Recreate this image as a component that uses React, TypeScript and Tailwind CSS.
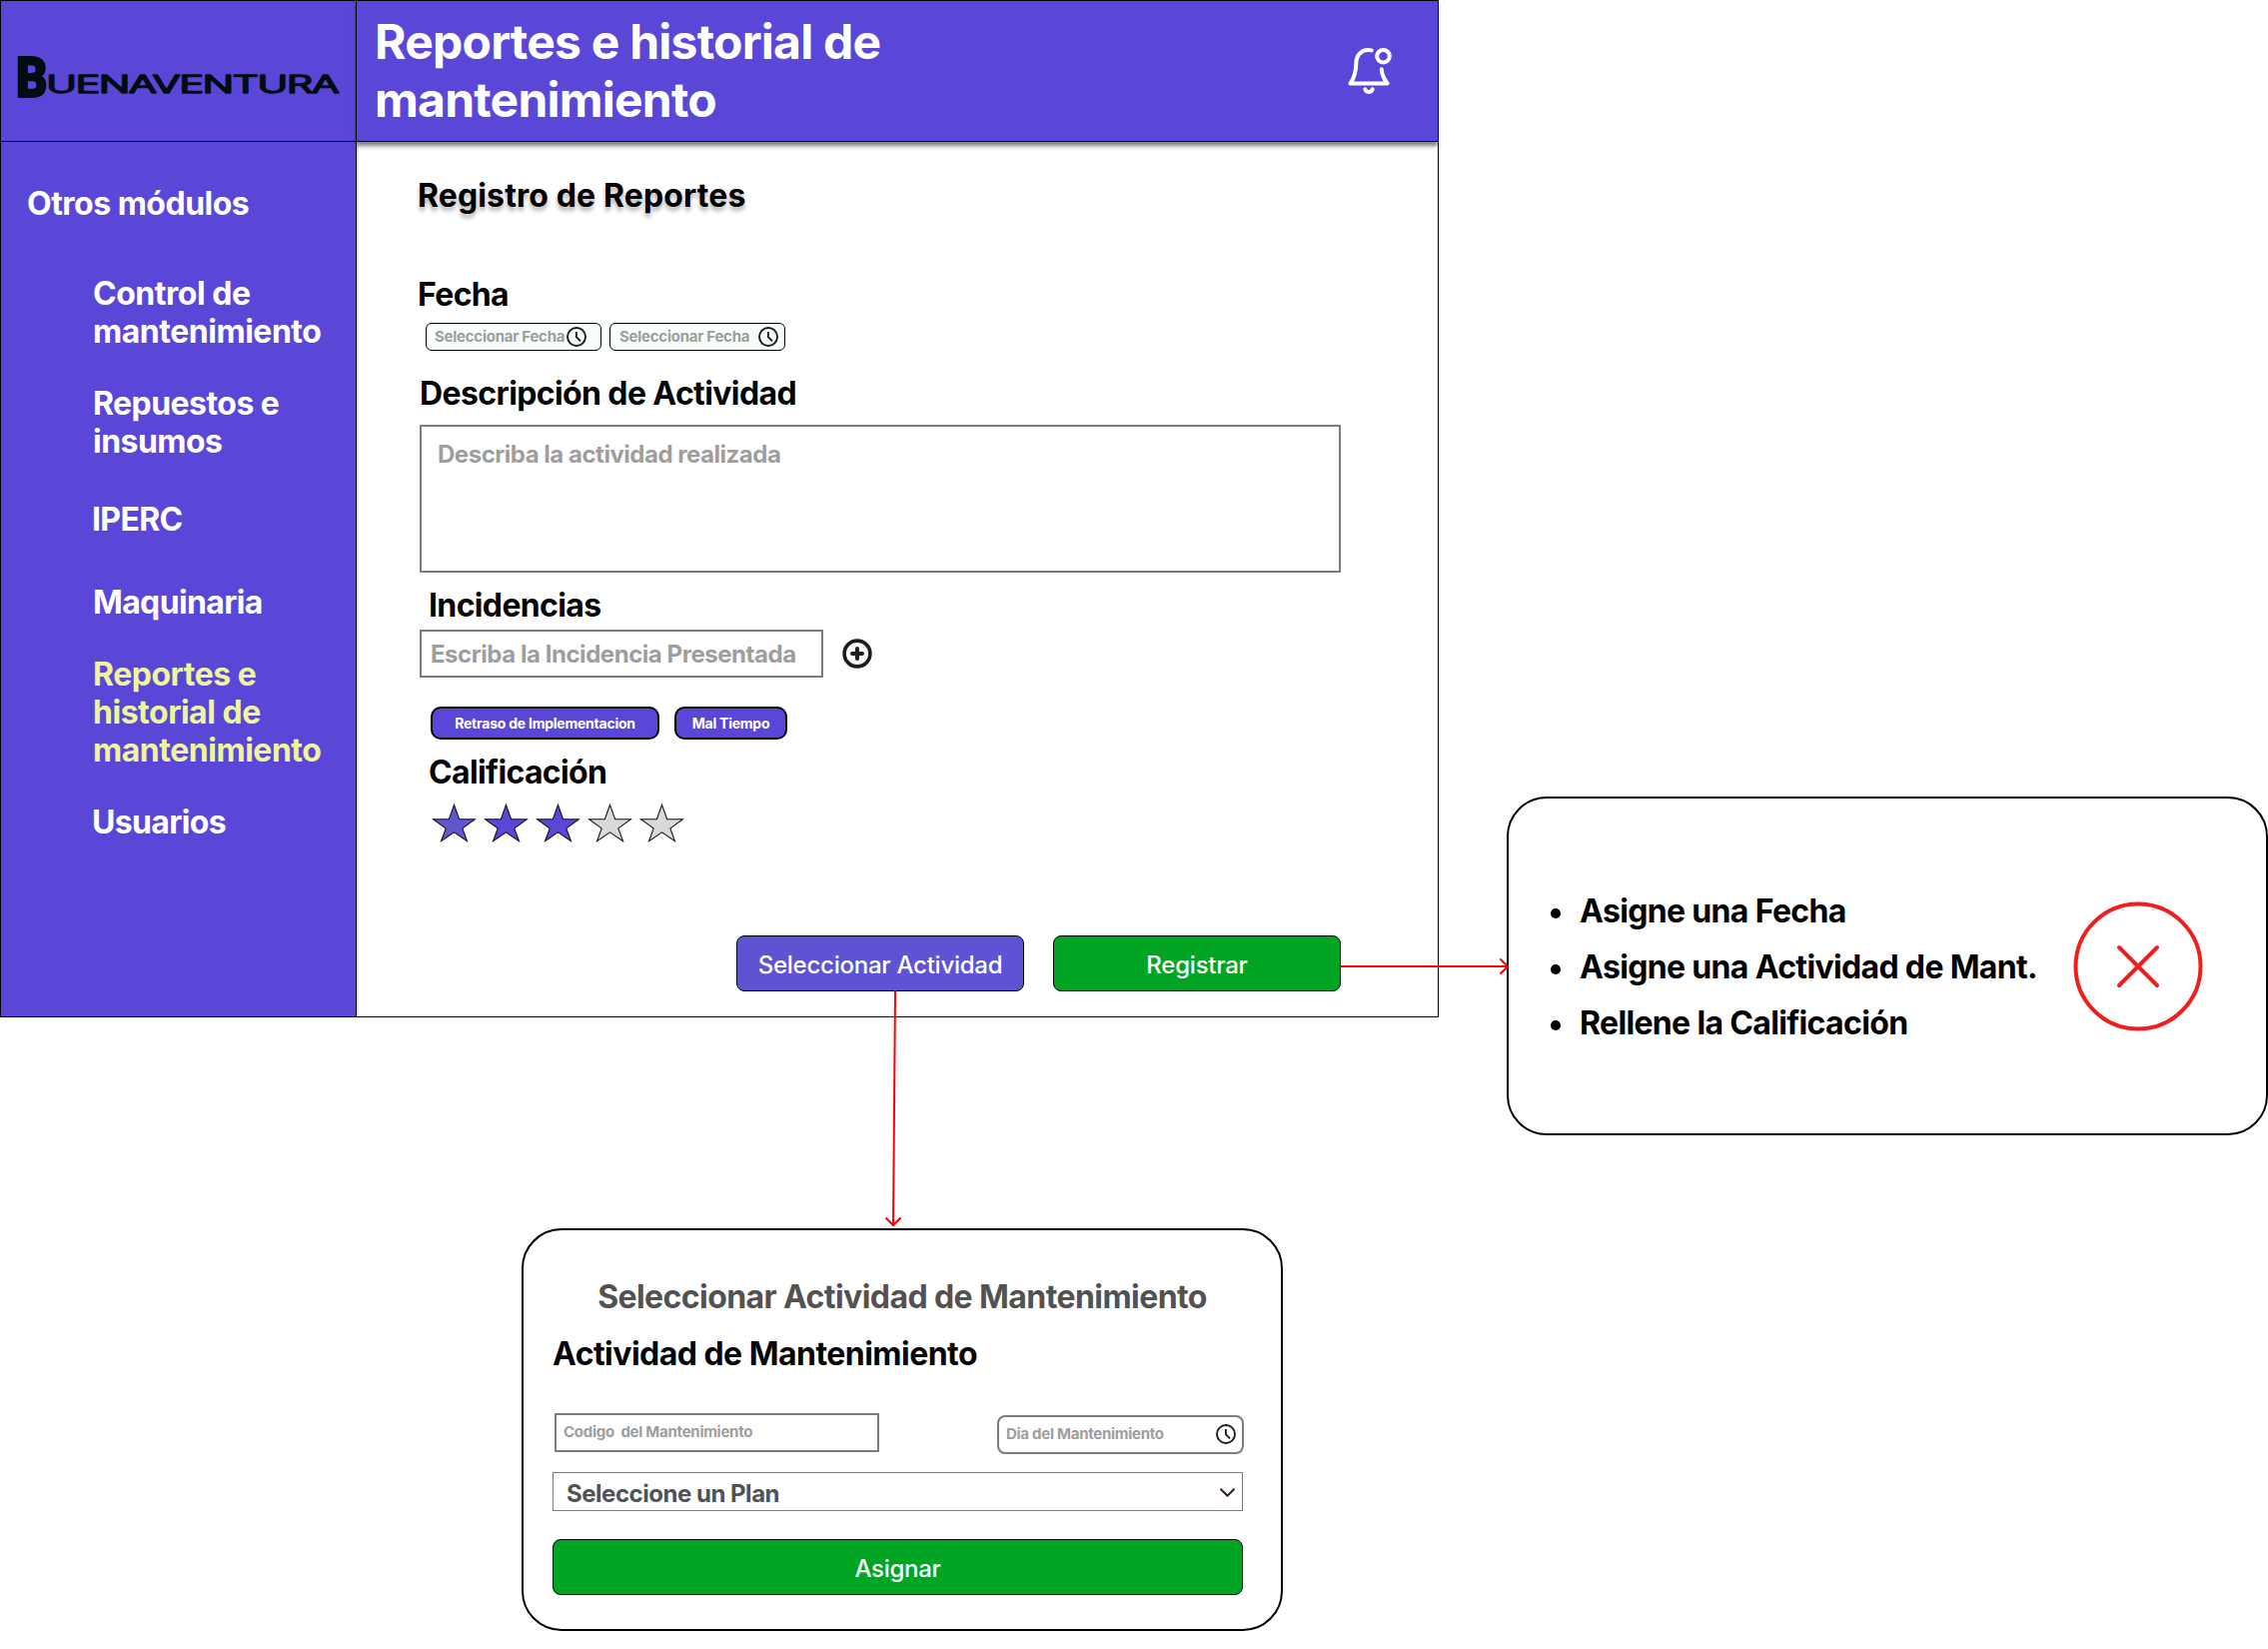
import React from "react";

const starPath = "M23 1.6 L28.3 16.4 L44.6 16.4 L31.6 25.9 L36.4 39 L23 29.9 L9.6 39 L14.4 25.9 L1.4 16.4 L17.7 16.4 Z";

function Star({ fill }: { fill: string }) {
  return (
    <svg className="h-10 w-[46px]" viewBox="0 0 46 40">
      <path d={starPath} fill={fill} stroke="#111" strokeWidth="1.1" transform="translate(1.2 0.8) scale(0.97)" />
    </svg>
  );
}

function Clock() {
  return (
    <svg className="h-5 w-5 shrink-0" viewBox="0 0 20 20" fill="none" stroke="#1d1b20" strokeWidth="1.9">
      <circle cx="10" cy="10" r="9" />
      <path d="M9.9 5v5.2l4.1 4.1" />
    </svg>
  );
}

function Logo() {
  return (
    <svg className="h-[141px] w-[355px] shrink-0" viewBox="0 0 355 141" fill="#020d12" stroke="#020d12" strokeLinejoin="round">
      <text x="15" y="96" fontFamily="Roboto" fontWeight="900" fontSize="55" strokeWidth="2" textLength="31" lengthAdjust="spacingAndGlyphs">B</text>
      <text x="45.5" y="92" fontFamily="Inter" fontWeight="300" fontSize="23.5" strokeWidth="1.7" textLength="292" lengthAdjust="spacingAndGlyphs">UENAVENTURA</text>
    </svg>
  );
}

function Sidebar() {
  return (
    <aside className="flex w-[356px] shrink-0 flex-col border-r border-black bg-[#5b47d7] text-white shadow-[1px_0_2px_rgba(0,0,0,0.25)]">
      <div className="h-[141px] border-b border-black">
        <Logo />
      </div>
      <h2 className="mt-[43px] ml-[26px] leading-[38px] tracking-[-0.016em]">Otros módulos</h2>
      <nav className="ml-[92px] flex flex-col leading-[38px]">
        <a className="mt-[52px] tracking-[-0.015em]">Control de<br />mantenimiento</a>
        <a className="mt-[34px] tracking-[-0.017em]">Repuestos e<br />insumos</a>
        <a className="mt-[40px] -ml-px">IPERC</a>
        <a className="mt-[45px]">Maquinaria</a>
        <a className="mt-[34px] tracking-[-0.015em] text-[#eff59a]">Reportes e<br />historial de<br />mantenimiento</a>
        <a className="mt-[34px] -ml-px tracking-[-0.021em]">Usuarios</a>
      </nav>
    </aside>
  );
}

function Screen() {
  return (
    <div className="flex h-[1018px] w-[1440px] border border-black bg-white text-[32px] font-bold tracking-[-0.02em]">
      <Sidebar />
      <main className="flex grow flex-col">
        <header className="flex h-[141px] shrink-0 items-start justify-between border-b border-black bg-[#5b47d7] text-white shadow-[0_4px_4px_rgba(0,0,0,0.5)]">
          <h1 className="mt-[12px] ml-[18px] text-[48px] leading-[58px] tracking-[-0.016em]">Reportes e historial de<br />mantenimiento</h1>
          <svg className="mt-[40px] mr-[41px] h-[60px] w-[56px]" viewBox="0 0 56 60" fill="none" stroke="#fff" strokeWidth="4" strokeLinecap="round" strokeLinejoin="round">
            <path d="M30.7 9.4 C21 7.5 15.5 14 15.3 22 C15.3 31 14 36 9.5 42.6 H46.7 C43 38 41.2 33 40.7 28.3" />
            <circle cx="42.5" cy="15.2" r="6.3" />
            <path d="M24.3 48.3 C26 51.9 30 51.9 31.7 48.3" />
          </svg>
        </header>
        <div className="flex flex-col pl-[63px] text-[#050505]">
          <h2 className="mt-[35px] -ml-[2px] leading-[38px] tracking-[0.004em] text-black [text-shadow:0_4px_4px_rgba(0,0,0,0.3)]">Registro de Reportes</h2>
          <h3 className="mt-[61px] -ml-[2px] leading-[38px]">Fecha</h3>
          <div className="mt-[9px] ml-[6px] flex gap-2 text-[15px] tracking-[-0.017em] text-[#9e9e9e]">
            <div className="flex h-7 w-44 items-center justify-between rounded-[6px] border border-black bg-[#f8fffb] pr-[14px] pl-[8px]">
              <span className="whitespace-nowrap">Seleccionar Fecha</span>
              <Clock />
            </div>
            <div className="flex h-7 w-44 items-center justify-between rounded-[6px] border border-black bg-[#f8fffb] pr-[6px] pl-[9px]">
              <span className="whitespace-nowrap">Seleccionar Fecha</span>
              <Clock />
            </div>
          </div>
          <h3 className="mt-[24px] leading-[38px] tracking-[-0.019em]">Descripción de Actividad</h3>
          <div className="mt-[12px] h-[148px] w-[922px] border-2 border-[#7d7d7d] px-4 pt-[13px] text-[24px] leading-[29px] tracking-[-0.02em] text-[#9e9e9e]">Describa la actividad realizada</div>
          <h3 className="mt-[14px] ml-[9px] leading-[38px]">Incidencias</h3>
          <div className="mt-[5px] flex items-center gap-[19px]">
            <div className="h-12 w-[404px] border-2 border-[#7d7d7d] px-[9px] pt-[8px] text-[24px] leading-[29px] tracking-[-0.019em] text-[#9e9e9e]">Escriba la Incidencia Presentada</div>
            <svg className="h-[30px] w-[30px]" viewBox="0 0 30 30" fill="none" stroke="#1d1b20" strokeWidth="4">
              <circle cx="15" cy="15" r="12.9" strokeWidth="3.6" />
              <path d="M15 10v10M10 15h10" strokeLinecap="round" />
            </svg>
          </div>
          <div className="mt-[29px] ml-[11px] flex gap-[15px] text-[14px] tracking-[-0.017em] text-white">
            <span className="flex h-[33px] w-[229px] items-center justify-center rounded-[10px] border-2 border-black bg-[#5b47d7]">Retraso de Implementacion</span>
            <span className="flex h-[33px] w-[113px] items-center justify-center rounded-[10px] border-2 border-black bg-[#5b47d7]">Mal Tiempo</span>
          </div>
          <h3 className="mt-[14px] ml-[9px] leading-[38px]">Calificación</h3>
          <div className="mt-[11px] ml-[11px] flex gap-[6px]">
            <Star fill="#6155d0" />
            <Star fill="#5b47d7" />
            <Star fill="#5b47d7" />
            <Star fill="#d9d9d9" />
            <Star fill="#d9d9d9" />
          </div>
          <div className="mt-[93px] ml-[317px] flex gap-[29px] text-[24px] font-medium tracking-[-0.01em] text-white">
            <button className="h-14 w-72 rounded-lg border border-black bg-[#5e53d2] pt-[3px]">Seleccionar Actividad</button>
            <button className="h-14 w-72 rounded-lg border border-black bg-[#02a424] pt-[3px]">Registrar</button>
          </div>
        </div>
      </main>
    </div>
  );
}

function ActivityDialog() {
  return (
    <section className="mt-[211px] ml-[522px] flex h-[403px] w-[762px] flex-col rounded-[40px] border-2 border-black bg-white px-[29px] font-bold">
      <h2 className="mt-[48px] text-center text-[32px] leading-[38px] tracking-[-0.018em] text-[#525252]">Seleccionar Actividad de Mantenimiento</h2>
      <h3 className="mt-[19px] text-[32px] leading-[38px] tracking-[-0.0165em] text-[#050505]">Actividad de Mantenimiento</h3>
      <div className="mt-[40px] ml-[2px] flex w-[690px] justify-between text-[15px] tracking-[-0.018em] text-[#9e9e9e]">
        <div className="h-[39px] w-[325px] border-2 border-[#7d7d7d] px-[7px] leading-[33px] whitespace-pre">Codigo  del Mantenimiento</div>
        <div className="mt-[2px] flex h-[39px] w-[247px] items-center justify-between rounded-lg border-2 border-[#7d7d7d] pr-[6px] pb-px pl-[7px]">
          <span>Dia del Mantenimiento</span>
          <Clock />
        </div>
      </div>
      <div className="mt-[18px] flex h-[39px] w-[691px] items-center justify-between border border-[#7d7d7d] pr-[6px] pl-[13px] text-[24px] tracking-[-0.02em] text-[#525252]">
        <span className="mt-[5px]">Seleccione un Plan</span>
        <svg className="h-[10px] w-[18px]" viewBox="0 0 18 10" fill="none" stroke="#3a1516" strokeWidth="2">
          <path d="M2.5 1.8 L9.5 8.6 L16.5 1.8" />
        </svg>
      </div>
      <button className="mt-[28px] h-14 w-[691px] rounded-lg border border-black bg-[#02a424] pt-[3px] text-[24px] font-medium tracking-[-0.012em] text-white">Asignar</button>
    </section>
  );
}

function ErrorDialog() {
  const items = ["Asigne una Fecha", "Asigne una Actividad de Mant.", "Rellene la Calificación"];
  return (
    <section className="mt-[797px] ml-[68px] flex h-[339px] w-[762px] shrink-0 items-center justify-between rounded-[40px] border-2 border-black bg-white pr-[63px] pl-[42px]">
      <ul className="mt-[2px] flex flex-col text-[32px] leading-[56px] font-bold tracking-[-0.0205em] text-black">
        {items.map((t) => (
          <li key={t} className="flex items-center gap-[19px]">
            <span className="mt-[4px] h-[10px] w-[10px] rounded-full bg-black" />
            {t}
          </li>
        ))}
      </ul>
      <svg className="h-[130px] w-[130px]" viewBox="0 0 130 130" fill="none" stroke="#f01e1e" strokeWidth="4" strokeLinecap="round">
        <circle cx="65" cy="65" r="62.5" />
        <path d="M46 46 L84 84 M84 46 L46 84" />
      </svg>
    </section>
  );
}

function Connectors() {
  return (
    <svg className="pointer-events-none absolute top-0 left-0 h-[1650px] w-[2270px]" viewBox="0 0 2270 1650" fill="none" stroke="#ff0000" strokeWidth="2" strokeLinecap="round">
      <path d="M1342 967 H1509 M1502 960 L1509 967 L1502 974" />
      <path d="M896 992 L894 1226 M887 1219 L894 1226 L901 1219" />
    </svg>
  );
}

export default function App() {
  return (
    <div className="relative flex h-[1650px] w-[2270px] items-start overflow-hidden bg-white font-['Inter',sans-serif]">
      <div className="flex w-[1440px] shrink-0 flex-col">
        <Screen />
        <ActivityDialog />
      </div>
      <ErrorDialog />
      <Connectors />
    </div>
  );
}
